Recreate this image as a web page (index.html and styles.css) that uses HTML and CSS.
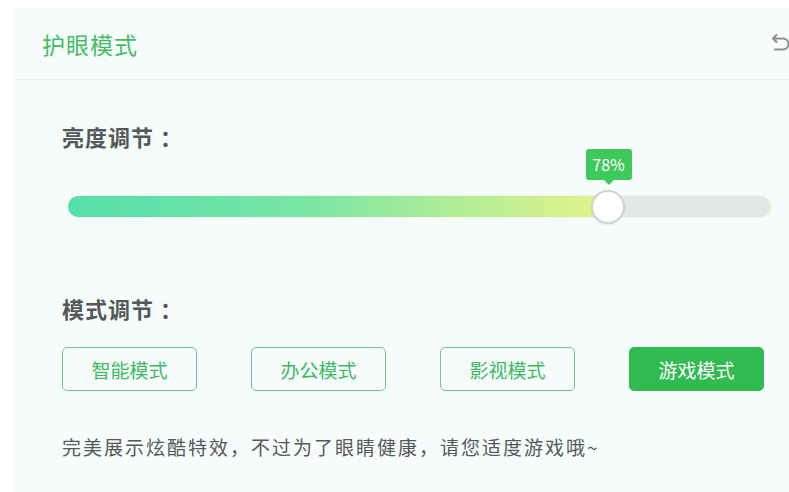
FILE: index.html
```html
<!DOCTYPE html>
<html lang="zh-CN">
<head>
    <meta charset="UTF-8">
    <meta name="viewport" content="width=device-width, initial-scale=1.0">
    <title>护眼模式</title>
    <link rel="stylesheet" href="styles.css">
</head>
<body>
    <div class="panel">
        <div class="header">
            <h1 class="title">护眼模式</h1>
            <button class="back" title="返回">
                <svg width="22" height="22" viewBox="0 0 22 22">
                    <path d="M6.5 3 L3 6.5 L6.5 10" fill="none" stroke="#8a8f8f" stroke-width="2" stroke-linecap="round" stroke-linejoin="round"/>
                    <path d="M3.5 6.5 H13 A5.5 5.5 0 0 1 13 17.5 H5" fill="none" stroke="#8a8f8f" stroke-width="2" stroke-linecap="round"/>
                </svg>
            </button>
        </div>
        <div class="content">
            <h2 class="label">亮度调节<span class="colon">：</span></h2>
            <div class="slider">
                <div class="track">
                    <div class="fill" style="width: 77%;">
                        <span class="tooltip">78%</span>
                        <span class="thumb"></span>
                    </div>
                </div>
            </div>
            <h2 class="label label-mode">模式调节<span class="colon">：</span></h2>
            <div class="modes">
                <button class="mode">智能模式</button>
                <button class="mode">办公模式</button>
                <button class="mode">影视模式</button>
                <button class="mode active">游戏模式</button>
            </div>
            <p class="tip">完美展示炫酷特效，不过为了眼睛健康，请您适度游戏哦~</p>
        </div>
    </div>
</body>
</html>
```

FILE: styles.css
```css
body {
    margin: 0;
    background: #ffffff;
    font-family: "Noto Sans CJK SC", "Noto Sans", sans-serif;
    overflow: hidden;
}
.panel {
    margin: 8px 0 0 14px;
    height: 484px;
    background: #f6fcfc;
}
.header {
    height: 71px;
    display: flex;
    align-items: center;
    justify-content: space-between;
    padding-left: 28px;
    border-bottom: 1px solid #e8efef;
}
.title {
    margin: 0;
    font-size: 23px;
    font-weight: normal;
    color: #45bd63;
    letter-spacing: 1px;
}
.back {
    background: none;
    border: none;
    padding: 0;
    margin-right: -3px;
    margin-top: 2px;
    cursor: pointer;
}
.content {
    padding: 43px 0 0 48px;
}
.label {
    margin: 0;
    font-size: 22px;
    line-height: 26px;
    font-weight: bold;
    color: #555858;
    letter-spacing: 1px;
}
.colon {
    margin-left: 6px;
}
.slider {
    padding-top: 47px;
}
.track {
    margin-left: 6px;
    width: 702px;
    height: 21px;
    border-radius: 11px;
    background: #e3e6e6;
    box-shadow: 1px 0 2px rgba(240, 210, 120, 0.5);
}
.fill {
    position: relative;
    height: 100%;
    border-radius: 11px 0 0 11px;
    background: linear-gradient(to right, #55dfac 0%, #7ae6a4 45%, #b7ee95 75%, #e6f28a 100%);
}
.thumb {
    position: absolute;
    right: -16px;
    top: -6px;
    width: 30px;
    height: 30px;
    border-radius: 50%;
    background: #ffffff;
    border: 2px solid #cfd3d3;
    box-shadow: 0 1px 2px rgba(0, 0, 0, 0.08);
}
.tooltip {
    position: absolute;
    right: -23px;
    top: -47px;
    width: 46px;
    height: 31px;
    line-height: 31px;
    text-align: center;
    border-radius: 3px;
    background: #3ec95b;
    color: #ffffff;
    font-size: 16px;
}
.tooltip::after {
    content: "";
    position: absolute;
    left: 50%;
    bottom: -5px;
    margin-left: -5px;
    border-left: 5px solid transparent;
    border-right: 5px solid transparent;
    border-top: 5px solid #3ec95b;
}
.label-mode {
    margin-top: 78px;
}
.modes {
    display: flex;
    gap: 54px;
    margin-top: 26px;
}
.mode {
    width: 135px;
    height: 44px;
    border: 1.5px solid #6cc788;
    border-radius: 5px;
    background: transparent;
    color: #3fba5e;
    font-family: inherit;
    font-size: 19px;
    cursor: pointer;
}
.mode.active {
    background: #2fbb4f;
    border-color: #2fbb4f;
    color: #ffffff;
}
.tip {
    margin: 44px 0 0;
    font-size: 19px;
    line-height: 24px;
    color: #555858;
    letter-spacing: 2px;
}
```
